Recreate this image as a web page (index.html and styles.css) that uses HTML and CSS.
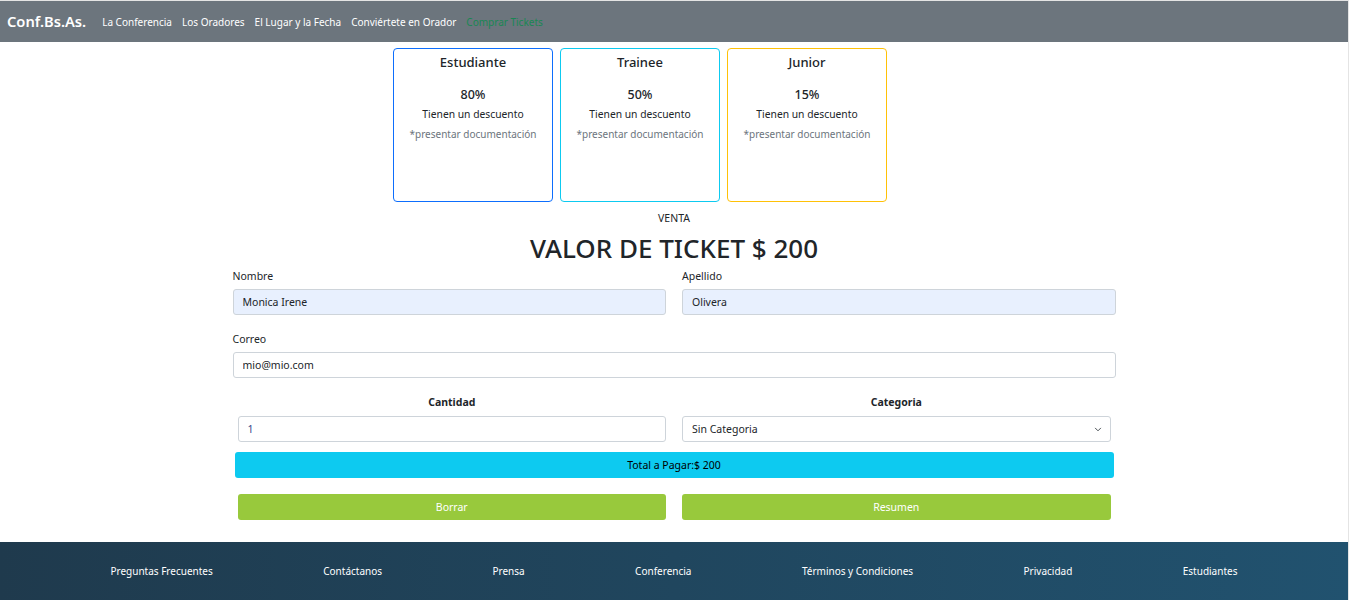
FILE: index.html
```html
<!DOCTYPE html>
<html lang="es">
<head>
<meta charset="utf-8">
<title>Conf.Bs.As. - Comprar Tickets</title>
<link rel="stylesheet" href="styles.css">
</head>
<body>
<nav class="navbar">
  <a class="brand" href="#">Conf.Bs.As.</a>
  <ul class="nav-links">
    <li><a href="#">La Conferencia</a></li>
    <li><a href="#">Los Oradores</a></li>
    <li><a href="#">El Lugar y la Fecha</a></li>
    <li><a href="#">Conviértete en Orador</a></li>
    <li><a class="active" href="#">Comprar Tickets</a></li>
  </ul>
</nav>
<main>
  <section class="cards">
    <div class="card card-blue">
      <h5 class="card-title">Estudiante</h5>
      <p class="pct">80%</p>
      <p class="desc">Tienen un descuento</p>
      <p class="note">*presentar documentación</p>
    </div>
    <div class="card card-cyan">
      <h5 class="card-title">Trainee</h5>
      <p class="pct">50%</p>
      <p class="desc">Tienen un descuento</p>
      <p class="note">*presentar documentación</p>
    </div>
    <div class="card card-yellow">
      <h5 class="card-title">Junior</h5>
      <p class="pct">15%</p>
      <p class="desc">Tienen un descuento</p>
      <p class="note">*presentar documentación</p>
    </div>
  </section>
  <section class="sale">
    <p class="venta">VENTA</p>
    <h1 class="price">VALOR DE TICKET $ 200</h1>
  </section>
  <form class="form">
    <div class="row-two">
      <div class="field">
        <label class="label">Nombre</label>
        <input class="input autofill" type="text" value="Monica Irene">
      </div>
      <div class="field">
        <label class="label">Apellido</label>
        <input class="input autofill" type="text" value="Olivera">
      </div>
    </div>
    <div class="field">
      <label class="label">Correo</label>
      <input class="input" type="email" value="mio@mio.com">
    </div>
    <div class="row-two inset">
      <div class="field">
        <label class="label bold">Cantidad</label>
        <input class="input qty" type="text" value="1">
      </div>
      <div class="field">
        <label class="label bold">Categoria</label>
        <div class="select-wrap">
          <select class="input select">
            <option>Sin Categoria</option>
            <option>Estudiante</option>
            <option>Trainee</option>
            <option>Junior</option>
          </select>
          <svg class="chevron" width="10" height="7" viewBox="0 0 16 16"><path d="M2 5l6 6 6-6" fill="none" stroke="#343a40" stroke-width="2" stroke-linecap="round" stroke-linejoin="round"/></svg>
        </div>
      </div>
    </div>
    <div class="total">Total a Pagar:$ 200</div>
    <div class="row-two inset buttons">
      <button type="reset" class="btn">Borrar</button>
      <button type="button" class="btn">Resumen</button>
    </div>
  </form>
</main>
<footer class="footer">
  <a href="#">Preguntas Frecuentes</a>
  <a href="#">Contáctanos</a>
  <a href="#">Prensa</a>
  <a href="#">Conferencia</a>
  <a href="#">Términos y Condiciones</a>
  <a href="#">Privacidad</a>
  <a href="#">Estudiantes</a>
</footer>
</body>
</html>
```
FILE: styles.css
```css
html {
  background: #e4e4e4;
}
body {
  margin: 1px 1px 0 0;
  background: #fff;
  font-family: "Noto Sans", "Open Sans", "DejaVu Sans", sans-serif;
  color: #212529;
  font-size: 11px;
}
a {
  text-decoration: none;
}
.navbar {
  display: flex;
  align-items: center;
  height: 41px;
  background: #6c757d;
  padding: 0 0 0 7px;
}
.brand {
  color: #fff;
  font-size: 14.7px;
  font-weight: 600;
  margin-right: 11px;
  padding-bottom: 2px;
}
.nav-links {
  display: flex;
  list-style: none;
  margin: 0;
  padding: 0;
}
.nav-links a {
  display: block;
  color: #fff;
  font-size: 10px;
  padding: 0 5px;
}
.nav-links a.active {
  color: #198754;
}
.cards {
  display: flex;
  justify-content: center;
  gap: 7px;
  padding: 6px 68px 0 0;
}
.card {
  width: 160px;
  height: 154px;
  box-sizing: border-box;
  border: 1px solid;
  border-radius: 4px;
  padding: 5px 4px 0;
  text-align: center;
}
.card-blue { border-color: #0d6efd; }
.card-cyan { border-color: #0dcaf0; }
.card-yellow { border-color: #ffc107; }
.card-title {
  margin: 0 0 14px;
  font-size: 13px;
  font-weight: 500;
  line-height: 16px;
}
.card p {
  margin: 0;
  line-height: 20px;
}
.card p.pct {
  font-size: 12.5px;
  font-weight: 500;
  padding-top: 1px;
  margin-bottom: -1px;
}
.desc {
  font-size: 10.3px;
}
.note {
  font-size: 10px;
  color: #6c757d;
}
.sale {
  text-align: center;
  padding-top: 8px;
}
.venta {
  margin: 0;
  line-height: 16px;
  font-size: 10.5px;
}
.price {
  margin: 6px 0 0;
  font-size: 26px;
  font-weight: 500;
  line-height: 32px;
}
.form {
  width: 883px;
  margin: 4px auto 0;
  display: flex;
  flex-direction: column;
}
.row-two {
  display: grid;
  grid-template-columns: 1fr 1fr;
  gap: 16px;
}
.row-two.inset {
  padding: 0 5px;
}
.field {
  display: flex;
  flex-direction: column;
}
.form > .field,
.form > .row-two {
  margin-bottom: 16px;
}
.label {
  line-height: 16px;
  margin-bottom: 5px;
  font-size: 10.5px;
}
.label.bold {
  font-weight: 700;
  text-align: center;
  margin-bottom: 6px;
}
.input {
  box-sizing: border-box;
  height: 26px;
  border: 1px solid #ced4da;
  border-radius: 3px;
  padding: 0 9px;
  font-family: inherit;
  font-size: 10.5px;
  color: #212529;
  background: #fff;
  width: 100%;
  margin: 0;
}
.input.autofill {
  background: #e8f0fe;
}
.input.qty {
  color: #3b4a8a;
}
.select-wrap {
  position: relative;
}
.select {
  appearance: none;
  -webkit-appearance: none;
}
.chevron {
  position: absolute;
  right: 8px;
  top: 10px;
  pointer-events: none;
}
.form > .row-two.inset:not(.buttons) {
  margin-bottom: 10px;
}
.total {
  margin: 0 2px 16px;
  height: 26px;
  line-height: 26px;
  background: #0dcaf0;
  border-radius: 3px;
  text-align: center;
  font-size: 10.5px;
  color: #000;
}
.buttons {
  margin-bottom: 22px !important;
}
.btn {
  height: 26px;
  border: none;
  border-radius: 3px;
  background: #98c93c;
  color: #fff;
  font-family: inherit;
  font-size: 10.5px;
  padding: 0;
}
.footer {
  height: 58px;
  display: flex;
  align-items: center;
  justify-content: space-evenly;
  background: linear-gradient(to right, #1f3a4d, #21526f);
}
.footer a {
  color: #fff;
  font-size: 10px;
}
```
